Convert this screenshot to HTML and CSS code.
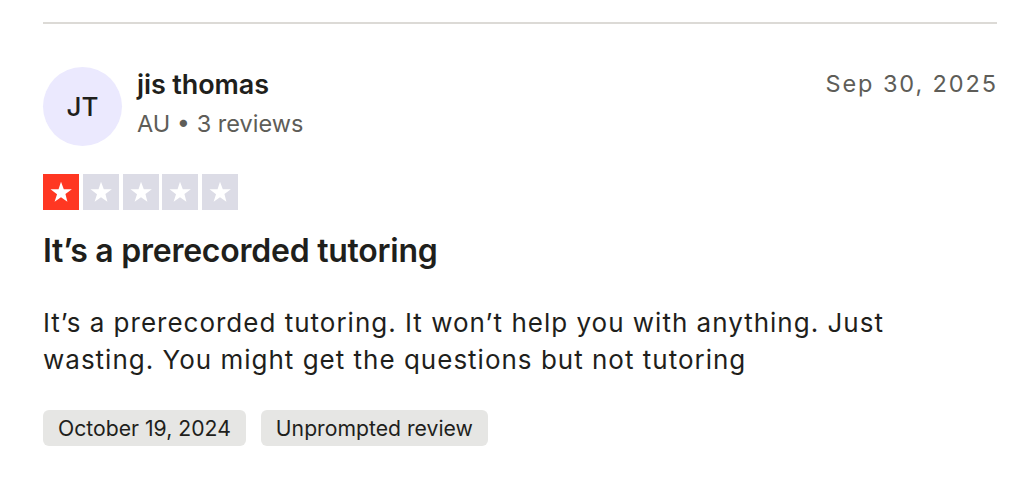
FILE: index.html
```html
<!DOCTYPE html>
<html>
<head>
<meta charset="utf-8">
<link rel="stylesheet" href="styles.css">
</head>
<body>
<div class="review">
  <div class="header">
    <div class="avatar">JT</div>
    <div class="who">
      <div class="name">jis thomas</div>
      <div class="meta">AU • 3 reviews</div>
    </div>
    <div class="date">Sep 30, 2025</div>
  </div>
  <div class="stars">
    <span class="star on"><svg viewBox="0 0 24 24"><path d="M12 3.2l2.4 6.5h6.9l-5.5 4.1 1.7 6.5L12 16.4l-5.5 3.9 2.1-6.4-5.6-4.2h6.9z" fill="#fff"/></svg></span>
    <span class="star"><svg viewBox="0 0 24 24"><path d="M12 3.2l2.4 6.5h6.9l-5.5 4.1 1.7 6.5L12 16.4l-5.5 3.9 2.1-6.4-5.6-4.2h6.9z" fill="#fff"/></svg></span>
    <span class="star"><svg viewBox="0 0 24 24"><path d="M12 3.2l2.4 6.5h6.9l-5.5 4.1 1.7 6.5L12 16.4l-5.5 3.9 2.1-6.4-5.6-4.2h6.9z" fill="#fff"/></svg></span>
    <span class="star"><svg viewBox="0 0 24 24"><path d="M12 3.2l2.4 6.5h6.9l-5.5 4.1 1.7 6.5L12 16.4l-5.5 3.9 2.1-6.4-5.6-4.2h6.9z" fill="#fff"/></svg></span>
    <span class="star"><svg viewBox="0 0 24 24"><path d="M12 3.2l2.4 6.5h6.9l-5.5 4.1 1.7 6.5L12 16.4l-5.5 3.9 2.1-6.4-5.6-4.2h6.9z" fill="#fff"/></svg></span>
  </div>
  <h2 class="title">It’s a prerecorded tutoring</h2>
  <p class="body">It’s a prerecorded tutoring. It won’t help you with anything. Just wasting. You might get the questions but not tutoring</p>
  <div class="tags">
    <span class="tag">October 19, 2024</span>
    <span class="tag">Unprompted review</span>
  </div>
</div>
</body>
</html>
```
FILE: styles.css
```css
html, body { margin: 0; background: #ffffff; }
body { font-family: Inter, "Noto Sans", sans-serif; color: #1f1f1c; }
.review {
  margin: 22px 27px 0 43px;
  border-top: 2px solid #dcdad6;
  padding-top: 42px;
}
.header { display: flex; align-items: flex-start; }
.avatar {
  width: 79px; height: 79px; border-radius: 50%;
  background: #ebe9fe;
  display: flex; align-items: center; justify-content: center;
  font-size: 26px; font-weight: 500; color: #1f1f1c;
  margin-top: 1px;
}
.who { margin-left: 15px; flex: 1; }
.name { font-size: 27px; font-weight: 600; line-height: 36px; margin-top: 1px; letter-spacing: -0.1px; }
.meta { font-size: 23.5px; color: #5e5d58; line-height: 32px; margin-top: 5px; }
.date { font-size: 23.5px; color: #5e5d58; letter-spacing: 1.9px; line-height: 32px; margin-top: 2px; margin-right: -1px; }
.stars { display: flex; gap: 3.75px; margin-top: 28px; }
.star { width: 36px; height: 36px; background: #dcdce6; display: flex; align-items: center; justify-content: center; }
.star.on { background: #ff3722; }
.star svg { width: 28px; height: 28px; }
.title { font-size: 32px; font-weight: 600; margin: 21px 0 0; line-height: 40px; letter-spacing: -0.25px; }
.body { font-size: 26px; line-height: 37px; margin: 33px 0 0; max-width: 900px; letter-spacing: 1.0px; }
.tags { display: flex; gap: 15px; margin-top: 32px; }
.tag { background: #e6e6e4; border-radius: 6px; font-size: 21.2px; padding: 0 15px; height: 36px; line-height: 36px; color: #1f1f1c; letter-spacing: 0; }
```
